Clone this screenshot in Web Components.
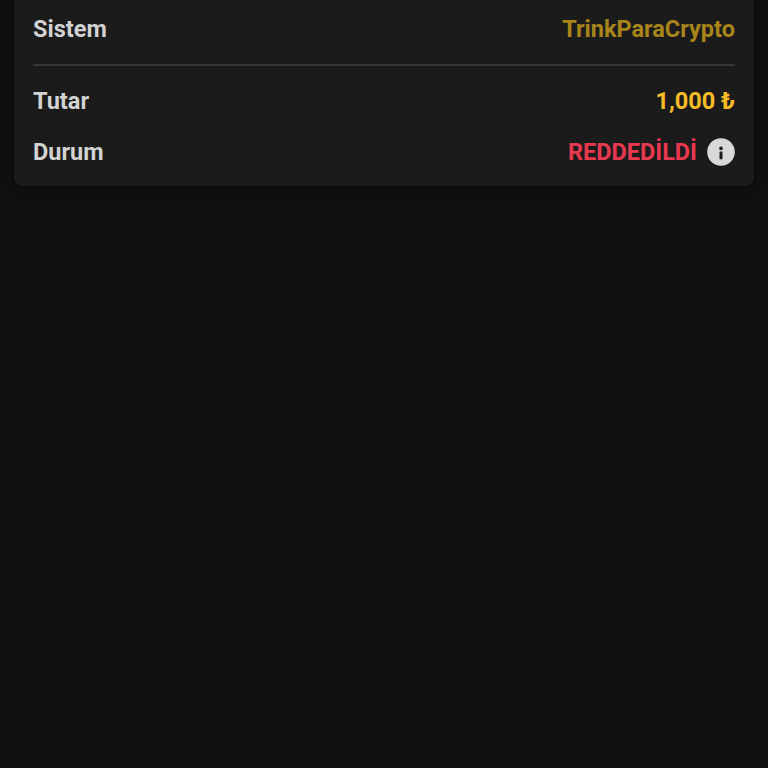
<!DOCTYPE html>
<html lang="tr">
<head>
<meta charset="utf-8">
<title>Detay</title>
<style>
  html, body { margin:0; height:100%; background:#101010; overflow:hidden; }
  body { font-family:Roboto, "Noto Sans", sans-serif; }
</style>
</head>
<body>
<detail-card>
  <detail-row label="Sistem" style="--row-h:57px; --row-mb:7px; --value-color:#a8851a;">TrinkParaCrypto</detail-row>
  <hr-line></hr-line>
  <detail-row label="Tutar" style="--row-h:69px; --value-color:#f8bd26;">1,000 ₺</detail-row>
  <detail-row label="Durum" style="--row-h:34px; --value-color:#e8384f;">REDDEDİLDİ<info-dot></info-dot></detail-row>
</detail-card>

<script>
(() => {
  'use strict';

  // ---------- card ----------
  class DetailCard extends HTMLElement {
    constructor() {
      super();
      this.attachShadow({ mode: 'open' }).innerHTML = `
        <style>
          :host{
            display:block; box-sizing:border-box;
            margin:0 14px; height:186px; padding:0 19px;
            background:#1b1b1b;
            border-radius:0 0 8px 8px;
            box-shadow:0 0 12px rgba(0,0,0,.35);
          }
        </style>
        <slot></slot>`;
    }
  }

  // ---------- row ----------
  class DetailRow extends HTMLElement {
    constructor() {
      super();
      this.attachShadow({ mode: 'open' }).innerHTML = `
        <style>
          :host{
            display:flex; align-items:center; justify-content:space-between;
            height:var(--row-h, 32px);
            margin-bottom:var(--row-mb, 0);
            font-size:23.5px; font-weight:700; line-height:26px;
          }
          .label{ color:#d2d2d2; }
          .value{ display:flex; align-items:center; gap:10px; color:var(--value-color, #fff); }
        </style>
        <span class="label"></span>
        <span class="value"><slot></slot></span>`;
    }
    connectedCallback() {
      this.shadowRoot.querySelector('.label').textContent = this.getAttribute('label') || '';
    }
  }

  // ---------- divider ----------
  class HrLine extends HTMLElement {
    constructor() {
      super();
      this.attachShadow({ mode: 'open' }).innerHTML = `
        <style>:host{ display:block; height:2px; background:#363636; }</style>`;
    }
  }

  // ---------- info icon ----------
  class InfoDot extends HTMLElement {
    constructor() {
      super();
      this.attachShadow({ mode: 'open' }).innerHTML = `
        <style>:host{ display:block; width:28px; height:28px; } svg{ display:block; }</style>
        <svg width="28" height="28" viewBox="0 0 28 28">
          <circle cx="14" cy="14" r="13.8" fill="#d9d9d9"/>
          <circle cx="14" cy="10.4" r="1.8" fill="#1b1b1b"/>
          <rect x="12.5" y="13.6" width="3" height="7.6" rx=".5" fill="#1b1b1b"/>
        </svg>`;
    }
  }

  customElements.define('detail-card', DetailCard);
  customElements.define('detail-row', DetailRow);
  customElements.define('hr-line', HrLine);
  customElements.define('info-dot', InfoDot);
})();
</script>
</body>
</html>
